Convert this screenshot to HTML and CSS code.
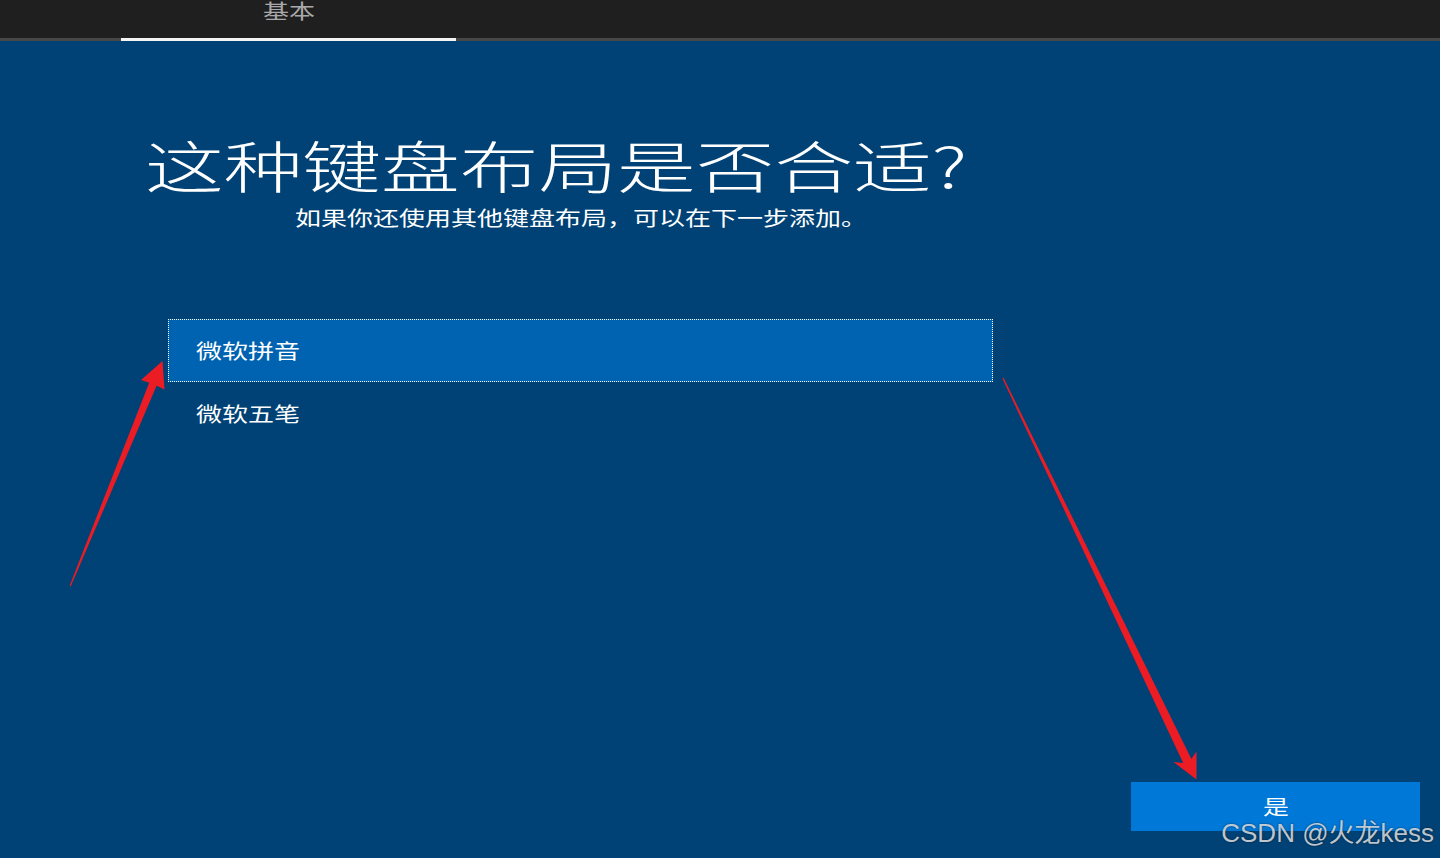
FILE: index.html
```html
<!DOCTYPE html>
<html lang="zh-CN">
<head>
<meta charset="utf-8">
<title>键盘布局</title>
<link rel="stylesheet" href="styles.css">
</head>
<body>
<div class="screen">
  <header class="topbar">
    <div class="tab"><span class="wide center">基本</span></div>
  </header>
  <main class="main">
    <section class="content">
      <h1 class="title"><span class="wide title-wide">这种键盘布局是否合适?</span></h1>
      <p class="subtitle"><span class="wide">如果你还使用其他键盘布局，可以在下一步添加。</span></p>
      <ul class="list">
        <li class="item selected"><span class="wide">微软拼音</span></li>
        <li class="item"><span class="wide">微软五笔</span></li>
      </ul>
    </section>
    <footer class="footer">
      <button class="yes"><span class="wide center">是</span></button>
    </footer>
  </main>
  <svg class="arrows" width="1440" height="858" viewBox="0 0 1440 858">
    <polygon fill="#ec1c24" points="69.5,586 70.8,586.3 156.6,385.7 164.5,389.5 162.5,361 141,380 149.2,382.7"/>
    <polygon fill="#ec1c24" points="1002.4,378.5 1003.6,377.8 1191.4,759 1196.5,751.5 1196.5,779.5 1173.5,762 1183.2,763"/>
  </svg>
  <div class="watermark">CSDN @火龙kess</div>
</div>
</body>
</html>
```

FILE: styles.css
```css
* { box-sizing: border-box; }
html, body { margin: 0; padding: 0; }
body {
  width: 1440px;
  height: 858px;
  overflow: hidden;
  background: #004275;
  font-family: "Noto Sans CJK SC", "Noto Sans", sans-serif;
  color: #ffffff;
}
.screen {
  position: relative;
  width: 1440px;
  height: 858px;
  display: flex;
  flex-direction: column;
}
.wide {
  display: inline-block;
  transform: scaleX(1.3);
  transform-origin: left center;
  white-space: nowrap;
}
.wide.center { transform-origin: center center; }
.wide.title-wide { transform: scaleX(1.405); }

.topbar {
  height: 41px;
  background: #1f1f1f;
  border-bottom: 3px solid #474747;
  display: flex;
  padding-left: 121px;
}
.tab {
  width: 335px;
  height: 41px;
  margin-bottom: -3px;
  border-bottom: 3px solid #f4f4f4;
  display: flex;
  justify-content: center;
  align-items: flex-start;
  font-size: 20px;
  line-height: 22px;
  color: #a9a9a9;
}

.main {
  flex: 1;
  display: flex;
  flex-direction: column;
}
.content {
  padding-top: 93px;
  flex: 1;
}
.title {
  margin: 0 0 0 145px;
  font-size: 56px;
  font-weight: 300;
  line-height: 60px;
  letter-spacing: 0;
}
.subtitle {
  margin: 10px 0 0 295px;
  font-size: 20px;
  line-height: 28px;
}
.list {
  list-style: none;
  margin: 87px 0 0 168px;
  padding: 0;
  width: 825px;
}
.item {
  height: 63px;
  display: flex;
  align-items: center;
  padding-left: 27px;
  font-size: 20px;
  border: 1px solid transparent;
}
.item.selected {
  background: #0063b1;
  border: 1px dotted #ffffff;
}

.footer {
  display: flex;
  justify-content: flex-end;
  padding: 0 20px 27px 0;
}
.yes {
  width: 289px;
  height: 49px;
  border: none;
  background: #0078d7;
  color: #ffffff;
  font-family: "Noto Sans CJK SC", sans-serif;
  font-size: 20px;
  padding: 0;
  display: flex;
  align-items: center;
  justify-content: center;
}

.arrows {
  position: absolute;
  left: 0;
  top: 0;
  pointer-events: none;
}
.watermark {
  position: absolute;
  right: 6px;
  bottom: 10px;
  font-family: "Liberation Sans", "Noto Sans CJK SC", sans-serif;
  font-size: 26px;
  line-height: 30px;
  color: rgba(225, 228, 232, 0.85);
  text-shadow: 0 0 2px rgba(0, 0, 0, 0.6);
  white-space: nowrap;
}
```
